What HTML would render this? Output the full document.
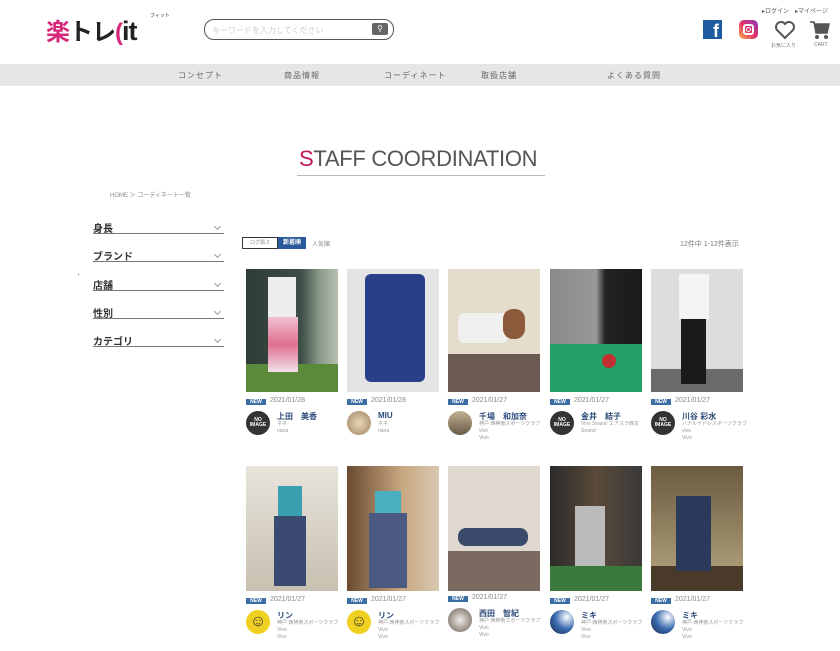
<!DOCTYPE html>
<html><head><meta charset="utf-8"><style>
*{margin:0;padding:0;box-sizing:border-box}
body{width:840px;height:651px;overflow:hidden;background:#fff;font-family:"Liberation Sans","Noto Sans CJK JP",sans-serif;color:#333;position:relative}
.a{position:absolute}
.nav{left:0;top:64px;width:840px;height:22px;background:#e6e6e6}
.nav span{position:absolute;top:6px;font-size:8px;color:#666;letter-spacing:1px}
.filter{position:absolute;left:93px;width:131px;height:14px;border-bottom:1px solid #777;font-size:10px;font-weight:bold;color:#333}
.filter:after{content:"";position:absolute;right:4px;top:4px;width:4px;height:4px;border-right:1px solid #999;border-bottom:1px solid #999;transform:rotate(45deg)}
.img{position:absolute;width:92px;overflow:hidden}
.new{position:absolute;font-size:5px;background:#3a6ea5;color:#fff;width:20px;height:6px;line-height:6px;text-align:center;font-weight:bold}
.date{position:absolute;font-size:7px;color:#888}
.av{position:absolute;width:24px;height:24px;border-radius:50%;overflow:hidden}
.nm{position:absolute;font-size:8px;color:#2c4a7a;font-weight:bold}
.sm{position:absolute;font-size:5px;color:#999;line-height:7px;width:70px}
</style></head><body>
<div class="a" style="left:46px;top:12px;font-size:24px;font-weight:bold;color:#d6287a;letter-spacing:-1px">楽<span style="color:#222">トレ</span><span style="color:#d6287a">(</span><span style="color:#222;font-size:27px">it</span></div>
<div class="a" style="left:150px;top:12px;font-size:5px;color:#333">フィット</div>
<div class="a" style="left:204px;top:19px;width:190px;height:21px;border:1.5px solid #555;border-radius:10px"></div>
<div class="a" style="left:212px;top:25px;font-size:8px;color:#ccc">キーワードを入力してください</div>
<div class="a" style="left:372px;top:23px;width:16px;height:12px;background:#666;border-radius:2px;color:#fff;font-size:8px;text-align:center;line-height:12px">⚲</div>
<div class="a" style="left:762px;top:6px;font-size:6px;color:#555">▸ログイン　▸マイページ</div>
<div class="a" style="left:703px;top:20px;width:19px;height:19px;background:#1d5aa0;color:#fff;font-weight:bold;font-size:18px;text-align:right;line-height:22px;padding-right:3px">f</div>
<div class="a" style="left:739px;top:20px;width:19px;height:19px;border-radius:5px;background:linear-gradient(45deg,#f9b04a,#e1306c,#8a3ab9)"><div class="a" style="left:4px;top:4px;width:11px;height:11px;border:2px solid #fff;border-radius:3px"></div><div class="a" style="left:7px;top:7px;width:5px;height:5px;border:1.5px solid #fff;border-radius:50%"></div></div>
<svg class="a" style="left:774px;top:20px" width="22" height="20" viewBox="0 0 22 20"><path d="M11 18 L3 10 A5 5 0 0 1 11 4 A5 5 0 0 1 19 10 Z" fill="none" stroke="#555" stroke-width="2"/></svg>
<div class="a" style="left:771px;top:42px;font-size:5px;color:#777">お気に入り</div>
<svg class="a" style="left:809px;top:20px" width="22" height="20" viewBox="0 0 22 20"><path d="M1 2 H5 L7 13 H18 L20 4 H6" fill="#555" stroke="#555" stroke-width="1.5"/><circle cx="8" cy="17" r="2" fill="#555"/><circle cx="17" cy="17" r="2" fill="#555"/></svg>
<div class="a" style="left:814px;top:42px;font-size:5px;color:#777">CART</div>
<div class="a nav"><span style="left:178px">コンセプト</span><span style="left:284px">商品情報</span><span style="left:384px">コーディネート</span><span style="left:481px">取扱店舗</span><span style="left:607px">よくある質問</span></div>
<div class="a" style="left:299px;top:146px;font-size:22px;color:#555;letter-spacing:-0.3px"><span style="color:#c2185b">S</span>TAFF COORDINATION</div>
<div class="a" style="left:297px;top:175px;width:248px;height:1px;background:#bbb"></div>
<div class="a" style="left:110px;top:190px;font-size:6px;color:#888">HOME ＞ コーディネート一覧</div>
<div class="filter" style="top:220px">身長</div>
<div class="filter" style="top:248px">ブランド</div>
<div class="filter" style="top:277px">店舗</div>
<div class="filter" style="top:305px">性別</div>
<div class="filter" style="top:333px">カテゴリ</div>
<div class="a" style="left:78px;top:274px;width:1px;height:1px;background:#666"></div>
<div class="a" style="left:242px;top:237px;width:36px;height:12px;border:1px solid #333;font-size:5px;color:#888;text-align:center;line-height:10px">ログ順ス</div>
<div class="a" style="left:278px;top:237px;width:28px;height:12px;background:#2a5a9a;font-size:6px;color:#fff;text-align:center;line-height:12px;font-weight:bold">新着順</div>
<div class="a" style="left:312px;top:239px;font-size:6px;color:#888">人気順</div>
<div class="a" style="left:680px;top:239px;font-size:7px;color:#777">12件中 1-12件表示</div>
<div class="img" style="left:246px;top:269px;height:123px;background:linear-gradient(90deg,#2e3b36 0%,#3d4f47 60%,#8a9a8a 80%,#b8c0b0 100%)"><div class="a" style="left:0;top:95px;width:92px;height:28px;background:#5a8a3a"></div><div class="a" style="left:22px;top:8px;width:28px;height:40px;background:#eee"></div><div class="a" style="left:22px;top:48px;width:30px;height:55px;background:linear-gradient(#f0c0d0,#e07090,#f0e0e8)"></div></div>
<div class="img" style="left:347px;top:269px;height:123px;background:#e4e4e4"><div class="a" style="left:18px;top:5px;width:60px;height:108px;background:#2a3f8a;border-radius:6px"></div></div>
<div class="img" style="left:448px;top:269px;height:123px;background:#e4dccc"><div class="a" style="left:0;top:85px;width:92px;height:38px;background:#6a5a52"></div><div class="a" style="left:10px;top:44px;width:50px;height:30px;background:#f0f0ee;border-radius:6px"></div><div class="a" style="left:55px;top:40px;width:22px;height:30px;background:#8a5a3a;border-radius:10px"></div></div>
<div class="img" style="left:550px;top:269px;height:123px;background:#24a068"><div class="a" style="left:0;top:0;width:92px;height:75px;background:linear-gradient(90deg,#8a8a8a 0%,#999 50%,#222 60%,#1a1a1a 100%)"></div><div class="a" style="left:52px;top:85px;width:14px;height:14px;border-radius:50%;background:#c03030"></div></div>
<div class="img" style="left:651px;top:269px;height:123px;background:#ddd"><div class="a" style="left:0;top:100px;width:92px;height:23px;background:#6a6a6a"></div><div class="a" style="left:28px;top:5px;width:30px;height:45px;background:#f4f4f4"></div><div class="a" style="left:30px;top:50px;width:25px;height:65px;background:#1a1a1a"></div></div>
<div class="new" style="left:246px;top:399px">NEW</div><div class="date" style="left:270px;top:397px">2021/01/28</div>
<div class="new" style="left:347px;top:399px">NEW</div><div class="date" style="left:371px;top:397px">2021/01/28</div>
<div class="new" style="left:448px;top:399px">NEW</div><div class="date" style="left:472px;top:397px">2021/01/27</div>
<div class="new" style="left:550px;top:399px">NEW</div><div class="date" style="left:574px;top:397px">2021/01/27</div>
<div class="new" style="left:651px;top:399px">NEW</div><div class="date" style="left:675px;top:397px">2021/01/27</div>
<div class="av" style="left:246px;top:411px;background:#333;color:#fff;font-size:5px;text-align:center;padding-top:7px;font-weight:bold;line-height:5px">NO<br>IMAGE</div>
<div class="nm" style="left:277px;top:411px">上田　美香</div><div class="sm" style="left:277px;top:421px">ネネ<br>nana</div>
<div class="av" style="left:347px;top:411px;background:radial-gradient(#e8d8b8,#a08060)"></div>
<div class="nm" style="left:378px;top:411px">MIU</div><div class="sm" style="left:378px;top:421px">ネネ<br>nana</div>
<div class="av" style="left:448px;top:411px;background:linear-gradient(#c0b090,#6a5a48)"></div>
<div class="nm" style="left:479px;top:411px">千場　和加奈</div><div class="sm" style="left:479px;top:421px">神戸 西神南スポーツクラブvivo<br>Vivo</div>
<div class="av" style="left:550px;top:411px;background:#333;color:#fff;font-size:5px;text-align:center;padding-top:7px;font-weight:bold;line-height:5px">NO<br>IMAGE</div>
<div class="nm" style="left:581px;top:411px">金井　結子</div><div class="sm" style="left:581px;top:421px">Vivo Seans! エアスラ西文<br>Seans!</div>
<div class="av" style="left:651px;top:411px;background:#333;color:#fff;font-size:5px;text-align:center;padding-top:7px;font-weight:bold;line-height:5px">NO<br>IMAGE</div>
<div class="nm" style="left:682px;top:411px">川谷 彩水</div><div class="sm" style="left:682px;top:421px">ハナルヤドレスポーツクラブvivo<br>Vivo</div>
<div class="img" style="left:246px;top:466px;height:125px;background:linear-gradient(#e8e4dc,#c8c0b0)"><div class="a" style="left:32px;top:20px;width:24px;height:30px;background:#3aa0b0"></div><div class="a" style="left:28px;top:50px;width:32px;height:70px;background:#3a4a70"></div></div>
<div class="img" style="left:347px;top:466px;height:125px;background:linear-gradient(90deg,#6a4a30,#c8a880 60%,#d8c8b0)"><div class="a" style="left:28px;top:25px;width:26px;height:22px;background:#4ab0c0"></div><div class="a" style="left:22px;top:47px;width:38px;height:75px;background:#4a5a80"></div></div>
<div class="img" style="left:448px;top:466px;height:125px;background:#ded8d0"><div class="a" style="left:0;top:85px;width:92px;height:40px;background:#7a6a60"></div><div class="a" style="left:10px;top:62px;width:70px;height:18px;background:#3a4a6a;border-radius:8px"></div></div>
<div class="img" style="left:550px;top:466px;height:125px;background:linear-gradient(90deg,#2a2a2a,#5a4a3a 50%,#3a3a3a)"><div class="a" style="left:0;top:100px;width:92px;height:25px;background:#3a7a3a"></div><div class="a" style="left:25px;top:40px;width:30px;height:60px;background:#bbb"></div></div>
<div class="img" style="left:651px;top:466px;height:125px;background:linear-gradient(#6a5a40,#b8a880)"><div class="a" style="left:0;top:100px;width:92px;height:25px;background:#4a3a2a"></div><div class="a" style="left:25px;top:30px;width:35px;height:75px;background:#2a3a5a"></div></div>
<div class="new" style="left:246px;top:598px">NEW</div><div class="date" style="left:270px;top:596px">2021/01/27</div>
<div class="new" style="left:347px;top:598px">NEW</div><div class="date" style="left:371px;top:596px">2021/01/27</div>
<div class="new" style="left:448px;top:596px">NEW</div><div class="date" style="left:472px;top:594px">2021/01/27</div>
<div class="new" style="left:550px;top:598px">NEW</div><div class="date" style="left:574px;top:596px">2021/01/27</div>
<div class="new" style="left:651px;top:598px">NEW</div><div class="date" style="left:675px;top:596px">2021/01/27</div>
<div class="av" style="left:246px;top:610px;background:#f0d020;color:#333;font-size:16px;text-align:center;line-height:24px">☺</div>
<div class="nm" style="left:277px;top:610px">リン</div><div class="sm" style="left:277px;top:620px">神戸 西神南スポーツクラブVivo<br>Vivo</div>
<div class="av" style="left:347px;top:610px;background:#f0d020;color:#333;font-size:16px;text-align:center;line-height:24px">☺</div>
<div class="nm" style="left:378px;top:610px">リン</div><div class="sm" style="left:378px;top:620px">神戸 西神南スポーツクラブVivo<br>Vivo</div>
<div class="av" style="left:448px;top:608px;background:radial-gradient(#eee,#6a5a4a)"></div>
<div class="nm" style="left:479px;top:608px">西田　智紀</div><div class="sm" style="left:479px;top:618px">神戸 西神南スポーツクラブVivo<br>Vivo</div>
<div class="av" style="left:550px;top:610px;background:radial-gradient(circle at 70% 30%,#fff,#3a6ab0 50%,#1a2a4a)"></div>
<div class="nm" style="left:581px;top:610px">ミキ</div><div class="sm" style="left:581px;top:620px">神戸 西神南スポーツクラブVivo<br>Vivo</div>
<div class="av" style="left:651px;top:610px;background:radial-gradient(circle at 70% 30%,#fff,#3a6ab0 50%,#1a2a4a)"></div>
<div class="nm" style="left:682px;top:610px">ミキ</div><div class="sm" style="left:682px;top:620px">神戸 西神南スポーツクラブVivo<br>Vivo</div>
</body></html>
